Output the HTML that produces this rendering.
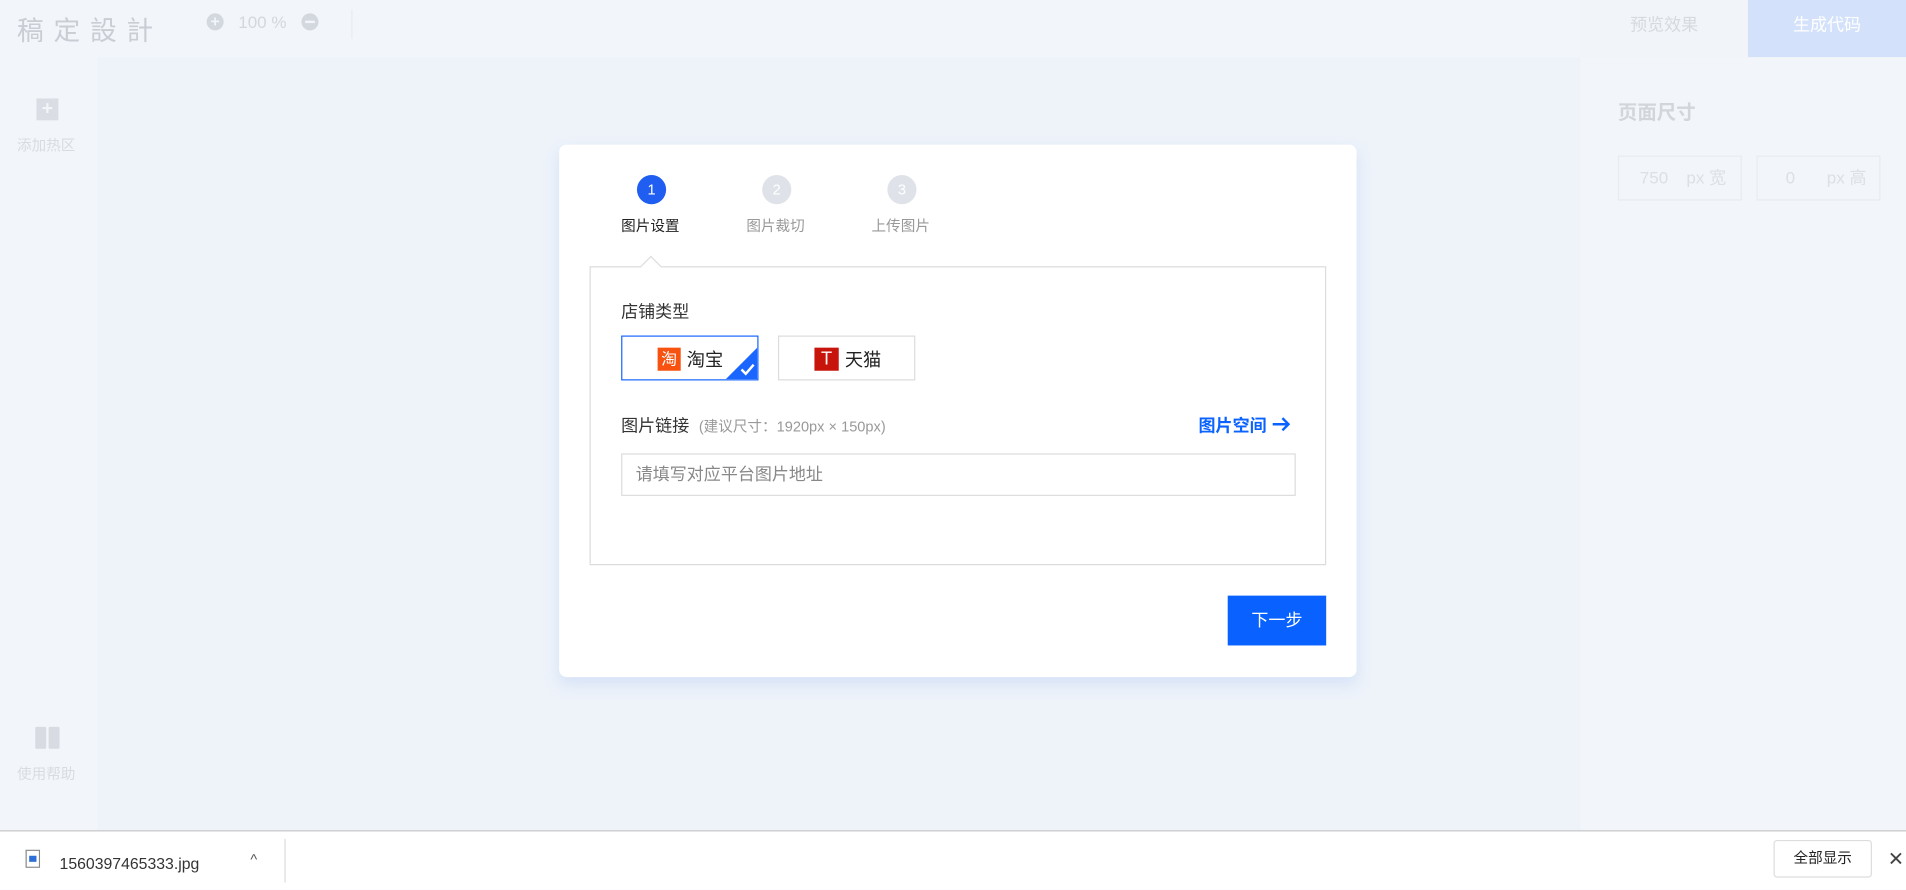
<!DOCTYPE html>
<html><head><meta charset="utf-8"><style>
*{margin:0;padding:0;box-sizing:border-box}
html,body{width:1906px;height:890px;overflow:hidden;background:#eef3fa}
#w{position:absolute;left:0;top:0;width:1568px;height:732px;transform:scale(1.21556);transform-origin:0 0;font-family:"Liberation Sans","Noto Sans CJK SC",sans-serif;background:#eef3fa}
.a{position:absolute}
</style></head><body><div id="w">
<div class="a" style="left:0;top:0;width:1568px;height:47px;background:#f2f5fa"></div>
<div class="a" style="left:14px;top:8px;font-size:22px;letter-spacing:8px;color:#c9cdd4">稿定設計</div>
<div class="a" style="left:170px;top:11px;width:14px;height:14px;border-radius:50%;background:#d3d7de;color:#f2f5fa;font-size:13px;line-height:14px;text-align:center;font-weight:bold">+</div>
<div class="a" style="left:196px;top:10px;font-size:14px;color:#d3d7de">100 %</div>
<div class="a" style="left:248px;top:11px;width:14px;height:14px;border-radius:50%;background:#d3d7de"><div class="a" style="left:3px;top:6px;width:8px;height:2px;background:#f2f5fa"></div></div>
<div class="a" style="left:289px;top:8px;width:1px;height:24px;background:#e9ecf1"></div>
<div class="a" style="left:1300px;top:0;width:138px;height:47px;background:#f1f4f9;color:#d6d9de;font-size:14px;text-align:center;line-height:40px">预览效果</div>
<div class="a" style="left:1438px;top:0;width:130px;height:47px;background:#d3e2fa;color:#fff;font-size:14px;text-align:center;line-height:40px">生成代码</div>
<div class="a" style="left:0;top:47px;width:80px;height:636px;background:#f2f5fa"></div>
<div class="a" style="left:30px;top:81px;width:18px;height:18px;background:#dadde3;color:#f2f5fa;text-align:center;line-height:18px;font-size:16px;font-weight:bold">+</div>
<div class="a" style="left:14px;top:111px;font-size:12px;color:#d8dce2">添加热区</div>
<div class="a" style="left:29px;top:598px;width:9px;height:18px;background:#d8dce2;border-radius:1px"></div>
<div class="a" style="left:40px;top:598px;width:9px;height:18px;background:#d8dce2;border-radius:1px"></div>
<div class="a" style="left:14px;top:628px;font-size:12px;color:#d8dce2">使用帮助</div>
<div class="a" style="left:1300px;top:47px;width:268px;height:636px;background:#f2f5fa"></div>
<div class="a" style="left:1331px;top:79px;font-size:16px;font-weight:bold;color:#d2d5da">页面尺寸</div>
<div class="a" style="left:1331px;top:128px;width:102px;height:37px;border:1px solid #e8ebf0;font-size:14px;color:#dcdfe4;line-height:35px"><span style="margin-left:17px">750</span><span style="margin-left:15px">px 宽</span></div>
<div class="a" style="left:1445px;top:128px;width:102px;height:37px;border:1px solid #e8ebf0;font-size:14px;color:#dcdfe4;line-height:35px"><span style="margin-left:23px">0</span><span style="margin-left:26px">px 高</span></div>
<div class="a" style="left:460px;top:119px;width:656px;height:438px;background:#fff;border-radius:6px;box-shadow:0 6px 12px rgba(170,195,240,.35)"></div>
<div class="a" style="left:524px;top:144px;width:24px;height:24px;border-radius:50%;background:#1f5ef0;color:#fff;font-size:12px;text-align:center;line-height:24px">1</div>
<div class="a" style="left:627px;top:144px;width:24px;height:24px;border-radius:50%;background:#dfe3e9;color:#fff;font-size:12px;text-align:center;line-height:24px">2</div>
<div class="a" style="left:730px;top:144px;width:24px;height:24px;border-radius:50%;background:#dfe3e9;color:#fff;font-size:12px;text-align:center;line-height:24px">3</div>
<div class="a" style="left:511px;top:177px;font-size:12px;color:#222">图片设置</div>
<div class="a" style="left:614px;top:177px;font-size:12px;color:#999">图片裁切</div>
<div class="a" style="left:717px;top:177px;font-size:12px;color:#999">上传图片</div>
<div class="a" style="left:485px;top:219px;width:606px;height:246px;border:1px solid #dcdcdc"></div>
<div class="a" style="left:529px;top:213px;width:13px;height:13px;background:#fff;border-left:1px solid #dcdcdc;border-top:1px solid #dcdcdc;transform:rotate(45deg)"></div>
<div class="a" style="left:511px;top:246px;font-size:14px;color:#333">店铺类型</div>
<div class="a" style="left:511px;top:276px;width:113px;height:37px;border:1px solid #1a66ff;overflow:hidden">
<div class="a" style="left:29px;top:9px;width:19px;height:19px;background:#f7520f;color:#fff;font-size:13px;line-height:19px;text-align:center">淘</div>
<div class="a" style="left:53px;top:8px;font-size:15px;color:#222">淘宝</div>
<div class="a" style="right:0;bottom:0;width:0;height:0;border-left:26px solid transparent;border-bottom:26px solid #1a66ff"></div>
<svg class="a" style="right:2px;bottom:3px" width="12" height="10"><path d="M1 5 L4.5 8.5 L11 1" stroke="#fff" stroke-width="2" fill="none"/></svg>
</div>
<div class="a" style="left:640px;top:276px;width:113px;height:37px;border:1px solid #dcdcdc">
<div class="a" style="left:29px;top:9px;width:20px;height:19px;background:#c8150c;color:#fff;font-size:15px;line-height:19px;text-align:center">T</div>
<div class="a" style="left:54px;top:8px;font-size:15px;color:#222">天猫</div>
</div>
<div class="a" style="left:511px;top:340px;font-size:14px;color:#333">图片链接 <span style="font-size:12px;color:#999;margin-left:4px">(建议尺寸：1920px × 150px)</span></div>
<div class="a" style="left:986px;top:340px;font-size:14px;font-weight:bold;color:#0a62ff">图片空间</div>
<svg class="a" style="left:1046px;top:342px" width="16" height="14"><path d="M1 7 H14 M9 2 L14 7 L9 12" stroke="#0a62ff" stroke-width="2" fill="none"/></svg>
<div class="a" style="left:511px;top:373px;width:555px;height:35px;border:1px solid #dcdcdc;font-size:14px;color:#888;line-height:33px;padding-left:11px">请填写对应平台图片地址</div>
<div class="a" style="left:1010px;top:490px;width:81px;height:41px;background:#0962ff;color:#fff;font-size:14px;text-align:center;line-height:41px">下一步</div>
<div class="a" style="left:0;top:683px;width:1568px;height:49px;background:#fff;border-top:1px solid #c5c5c5"></div>
<svg class="a" style="left:21px;top:699px" width="12" height="15"><rect x="0.5" y="0.5" width="11" height="14" fill="#fff" stroke="#888"/><rect x="3" y="5" width="6" height="5" fill="#2d6fd6"/></svg>
<div class="a" style="left:49px;top:703px;font-size:13px;color:#333">1560397465333.jpg</div>
<div class="a" style="left:206px;top:700px;font-size:12px;color:#555">^</div>
<div class="a" style="left:234px;top:690px;width:1px;height:36px;background:#ddd"></div>
<div class="a" style="left:1459px;top:691px;width:81px;height:31px;border:1px solid #ddd;border-radius:3px;font-size:12px;color:#222;text-align:center;line-height:29px">全部显示</div>
<div class="a" style="left:1553px;top:697px;font-size:16px;color:#444">✕</div>
</div></body></html>
